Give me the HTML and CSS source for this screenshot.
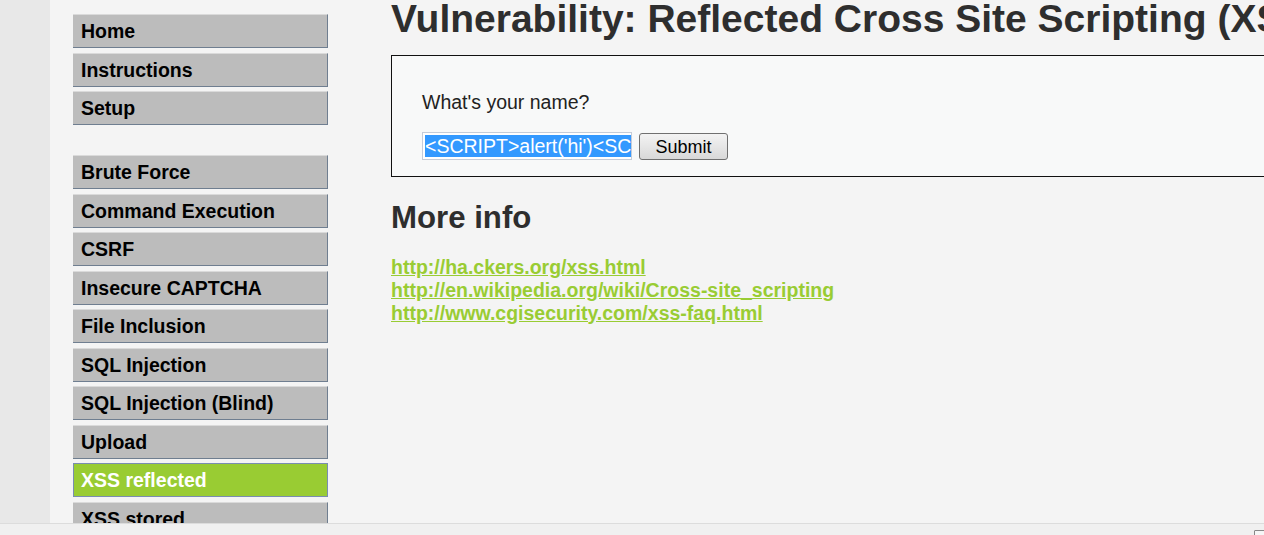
FILE: index.html
```html
<!DOCTYPE html>
<html>
<head>
<meta charset="utf-8">
<title>DVWA - XSS reflected</title>
<link rel="stylesheet" href="styles.css">
</head>
<body>
<div class="page">
  <div class="strip"></div>
  <div class="menu">
    <ul class="group">
      <li><a href="#">Home</a></li>
      <li><a href="#">Instructions</a></li>
      <li><a href="#">Setup</a></li>
    </ul>
    <ul class="group">
      <li><a href="#">Brute Force</a></li>
      <li><a href="#">Command Execution</a></li>
      <li><a href="#">CSRF</a></li>
      <li><a href="#">Insecure CAPTCHA</a></li>
      <li><a href="#">File Inclusion</a></li>
      <li><a href="#">SQL Injection</a></li>
      <li><a href="#">SQL Injection (Blind)</a></li>
      <li><a href="#">Upload</a></li>
      <li class="selected"><a href="#">XSS reflected</a></li>
      <li><a href="#">XSS stored</a></li>
    </ul>
  </div>
  <div class="main">
    <h1 class="title">Vulnerability: Reflected Cross Site Scripting (XSS)</h1>
    <div class="vuln-box">
      <p class="question">What's your name?</p>
      <div class="form-row">
        <div class="name-input"><span class="sel">&lt;SCRIPT&gt;alert('hi')&lt;SC</span></div>
        <button class="submit" type="button">Submit</button>
      </div>
    </div>
    <h2 class="more">More info</h2>
    <ul class="links">
      <li><a href="#">http://ha.ckers.org/xss.html</a></li>
      <li><a href="#">http://en.wikipedia.org/wiki/Cross-site_scripting</a></li>
      <li><a href="#">http://www.cgisecurity.com/xss-faq.html</a></li>
    </ul>
  </div>
</div>
<div class="statusbar"><span class="corner"></span></div>
</body>
</html>
```
FILE: styles.css
```css
html, body {
  margin: 0;
  padding: 0;
  height: 100%;
  overflow: hidden;
}
body {
  background: #f4f4f4;
  font-family: "Liberation Sans", Arial, sans-serif;
  color: #2e2e2e;
}
.page {
  display: flex;
  align-items: flex-start;
  min-height: 100vh;
}
.strip {
  width: 50px;
  flex: 0 0 50px;
  align-self: stretch;
  background: #e8e8e8;
}
.menu {
  flex: 0 0 255px;
  width: 255px;
  margin-left: 23px;
  padding-top: 14px;
}
.group {
  list-style: none;
  margin: 0 0 30px 0;
  padding: 0;
}
.group li {
  margin-bottom: 4.5px;
}
.group li a {
  display: block;
  box-sizing: border-box;
  height: 34px;
  line-height: 32px;
  padding-left: 8px;
  background: #bcbcbc;
  border-top: 1px solid #dadada;
  border-bottom: 1px solid #6f7e90;
  border-right: 1px solid #6f7e90;
  color: #000;
  font-weight: bold;
  font-size: 19.5px;
  text-decoration: none;
  white-space: nowrap;
}
.group li.selected a {
  background: #99cc33;
  color: #fff;
  border: 1px solid #7a8db0;
  padding-left: 7px;
}
.main {
  margin-left: 63px;
  flex: 0 0 1000px;
  width: 1000px;
}
.title {
  margin: 0;
  font-size: 39px;
  line-height: 37px;
  font-weight: bold;
  color: #2e2e2e;
  white-space: nowrap;
}
.vuln-box {
  margin-top: 18px;
  border: 1px solid #111;
  background: #f8f9f9;
  padding: 35px 30px 16px 30px;
}
.question {
  margin: 0;
  font-size: 19.5px;
  line-height: 22.4px;
  color: #222;
}
.form-row {
  display: flex;
  align-items: center;
  gap: 7px;
  margin-top: 18.6px;
}
.name-input {
  box-sizing: border-box;
  width: 210px;
  height: 28px;
  border: 1px solid #c5ccd8;
  background: #fff;
  padding: 2px 0 0 2px;
  overflow: hidden;
  white-space: nowrap;
  font-size: 19.5px;
  line-height: 22px;
}
.sel {
  background: #3399ff;
  color: #fff;
}
.submit {
  box-sizing: border-box;
  width: 89px;
  height: 27px;
  margin-top: 1px;
  border: 1px solid #707070;
  border-radius: 3px;
  background: linear-gradient(#f3f3f3, #e6e6e6 50%, #d8d8d8);
  font-family: "Liberation Sans", Arial, sans-serif;
  font-size: 18px;
  color: #000;
  padding: 2px 0 0 0;
}
.more {
  margin: 23px 0 0 0;
  font-size: 31.2px;
  line-height: 36px;
  font-weight: bold;
  color: #2e2e2e;
}
.links {
  list-style: none;
  margin: 19.5px 0 0 0;
  padding: 0;
}
.links li {
  font-size: 19.5px;
  line-height: 23px;
}
.links a {
  color: #99cc33;
  font-weight: bold;
  text-decoration: underline;
}
.statusbar {
  position: fixed;
  left: 0;
  right: 0;
  bottom: 0;
  height: 11px;
  background: #f0f0f0;
  border-top: 1px solid #dcdcdc;
}
.corner {
  position: absolute;
  left: 1254px;
  top: 6px;
  width: 14px;
  height: 10px;
  border: 1px solid #888;
  border-radius: 1px;
  background: #f6f6f6;
}
```
